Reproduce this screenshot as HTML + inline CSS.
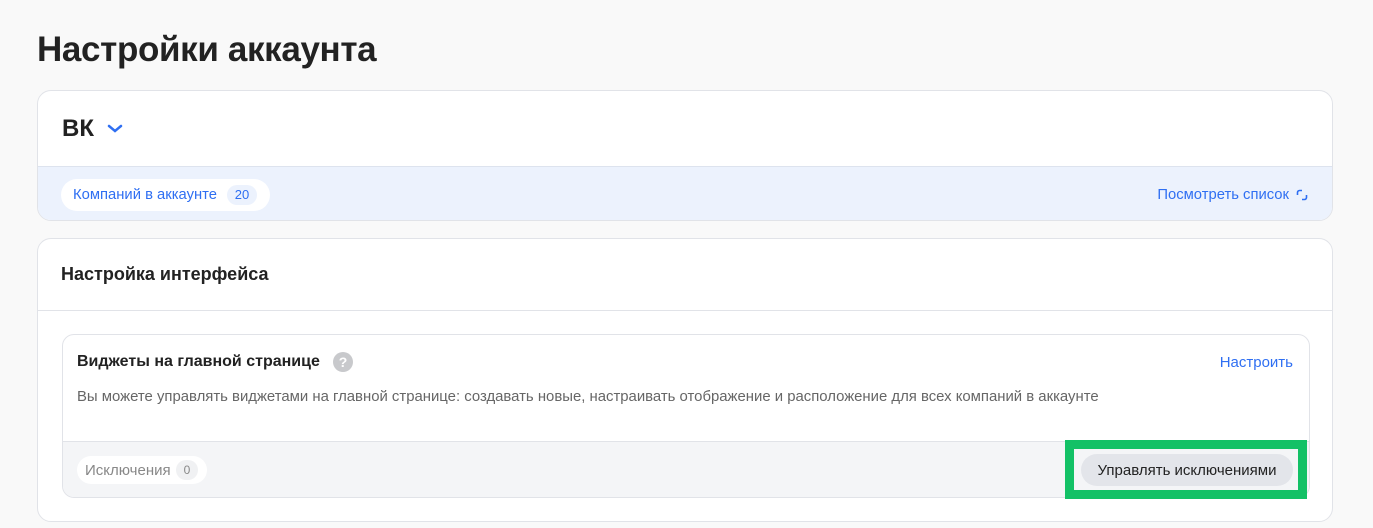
<!DOCTYPE html>
<html><head><meta charset="utf-8"><style>
*{box-sizing:border-box;margin:0;padding:0}
body{width:1373px;height:528px;overflow:hidden;background:#f9f9f9;font-family:"Liberation Sans",sans-serif;color:#222;position:relative}
.abs{position:absolute}
h1{position:absolute;left:37px;top:30px;font-size:35px;font-weight:700;color:#222;letter-spacing:-0.35px}
.card{position:absolute;background:#fff;border:1px solid #e1e3e8;border-radius:14px;overflow:hidden}
</style></head><body>
<h1>Настройки аккаунта</h1>
<div class="card" style="left:37px;top:90px;width:1296px;height:131px">
 <div class="abs" style="left:24px;top:24px;font-size:24px;font-weight:700">ВК</div>
 <svg class="abs" style="left:69px;top:33px" width="16" height="10" viewBox="0 0 16 10"><path d="M2 2l6 5 6-5" stroke="#2f6ff2" stroke-width="2.5" fill="none" stroke-linecap="round"/></svg>
 <div class="abs" style="left:0;top:75px;width:100%;height:56px;background:#ecf2fd;border-top:1px solid #dde3ee"></div>
 <div class="abs" style="left:23px;top:88px;width:209px;height:32px;background:#fff;border-radius:16px"></div>
 <div class="abs" style="left:35px;top:96px;font-size:14.8px;color:#2f6ff2">Компаний в аккаунте</div>
 <div class="abs" style="left:189px;top:94px;width:30px;height:20px;background:#ecf2fd;border-radius:10px;font-size:13px;color:#2f6ff2;text-align:center;line-height:20px">20</div>
 <div class="abs" style="right:43px;top:96px;font-size:14.8px;color:#2f6ff2">Посмотреть список</div>
 <svg class="abs" style="left:1258px;top:98px" width="12" height="12" viewBox="0 0 12 12"><path d="M6 1.5H3.5a2 2 0 0 0-2 2V6M6 10.5h2.5a2 2 0 0 0 2-2V6" stroke="#2f6ff2" stroke-width="1.6" fill="none"/></svg>
</div>
<div class="card" style="left:37px;top:238px;width:1296px;height:284px">
 <div class="abs" style="left:23px;top:25px;font-size:18px;font-weight:700">Настройка интерфейса</div>
 <div class="abs" style="left:0;top:71px;width:100%;height:1px;background:#e1e3e8"></div>
 <div class="card" style="left:24px;top:95px;width:1248px;height:164px;border-radius:12px">
  <div class="abs" style="left:14px;top:18px;font-size:16px;font-weight:700">Виджеты на главной странице</div>
  <div class="abs" style="left:270px;top:17px;width:20px;height:20px;border-radius:50%;background:#c8c9cc;color:#fff;font-size:14px;font-weight:700;text-align:center;line-height:20px">?</div>
  <div class="abs" style="right:16px;top:19px;font-size:15px;color:#2f6ff2">Настроить</div>
  <div class="abs" style="left:14px;top:54px;font-size:14.9px;color:#666">Вы можете управлять виджетами на главной странице: создавать новые, настраивать отображение и расположение для всех компаний в аккаунте</div>
  <div class="abs" style="left:0;top:106px;width:100%;height:58px;background:#f4f5f7;border-top:1px solid #e1e3e8"></div>
  <div class="abs" style="left:14px;top:121px;width:130px;height:28px;background:#fff;border-radius:14px"></div>
  <div class="abs" style="left:22px;top:127px;font-size:15px;color:#888">Исключения</div>
  <div class="abs" style="left:113px;top:125px;width:22px;height:20px;background:#f0f1f3;border-radius:10px;font-size:12px;color:#888;text-align:center;line-height:20px">0</div>
 </div>
</div>
<div class="abs" style="left:1065px;top:440px;width:242px;height:59px;border:9px solid #13c166;background:#f4f5f7"></div>
<div class="abs" style="left:1081px;top:454px;width:212px;height:32px;background:#e3e5ea;border-radius:16px;font-size:15px;color:#222;text-align:center;line-height:33px">Управлять исключениями</div>
</body></html>
